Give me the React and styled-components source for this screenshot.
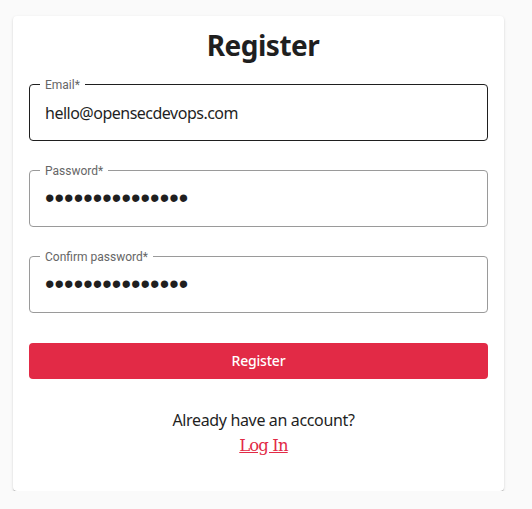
import React from 'react';
import styled, { createGlobalStyle } from 'styled-components';

const GlobalStyle = createGlobalStyle`
  body {
    margin: 0;
    background-color: #fafafa;
    font-family: "Noto Sans", "Liberation Sans", sans-serif;
    color: #1f1f1f;
  }
`;

const fields = [
    { label: 'Email*', type: 'email', value: 'hello@opensecdevops.com', active: true },
    { label: 'Password*', type: 'password', value: 'secretpassword1' },
    { label: 'Confirm password*', type: 'password', value: 'secretpassword1' },
];

const App = () => {
    return (
        <>
            <GlobalStyle />
            <Card>
                <Title>Register</Title>
                <Form onSubmit={(e) => e.preventDefault()}>
                    {fields.map((f) => (
                        <Field key={f.label} $active={f.active}>
                            <Legend>{f.label}</Legend>
                            <Input type={f.type} defaultValue={f.value} $secret={f.type === 'password'} />
                        </Field>
                    ))}
                    <Button type="submit">Register</Button>
                </Form>
                <Footer>
                    <span>Already have an account?</span>
                    <LoginLink href="#login">Log In</LoginLink>
                </Footer>
            </Card>
        </>
    );
};

export default App;

const Card = styled.div`
  box-sizing: border-box;
  width: 491px;
  margin: 16px 0 0 13px;
  padding: 13px 16px 32px;
  background-color: #fff;
  border-radius: 4px;
  box-shadow: 0 2px 1px -1px rgb(0 0 0 / 22%), 0 1px 1px 0 rgb(0 0 0 / 14%), 0 1px 3px 0 rgb(0 0 0 / 12%);
`;

const Title = styled.h1`
  margin: 0 0 16px;
  padding-left: 9px;
  font-size: 28px;
  line-height: 1.2;
  font-weight: 700;
  letter-spacing: -0.5px;
  text-align: center;
  color: #1f1f1f;
`;

const Form = styled.form`
  display: flex;
  flex-direction: column;
  gap: 24px;
`;

const Field = styled.fieldset`
  margin: 0;
  min-width: 0;
  padding: 0 10px;
  border: 1px solid ${(p) => (p.$active ? '#1f1f1f' : '#9a9a9a')};
  border-radius: 4px;
`;

const Legend = styled.legend`
  padding: 0 5px;
  font-family: Roboto, "Noto Sans", sans-serif;
  font-size: 12px;
  line-height: 12px;
  color: #666;
`;

const Input = styled.input`
  display: block;
  box-sizing: border-box;
  width: 100%;
  height: 44px;
  margin: 0 0 5px;
  padding: 0 5px;
  border: 0;
  outline: none;
  background: transparent;
  color: #1f1f1f;
  font-family: ${(p) => (p.$secret ? '"Liberation Sans", sans-serif' : '"Noto Sans", sans-serif')};
  font-size: ${(p) => (p.$secret ? '27px' : '16px')};
  letter-spacing: ${(p) => (p.$secret ? '0.1px' : '-0.5px')};
`;

const Button = styled.button`
  margin-top: 6px;
  height: 36px;
  border: 0;
  border-radius: 4px;
  background-color: #e22a46;
  color: #fff;
  font-family: "Noto Sans", sans-serif;
  font-size: 14px;
  font-weight: 500;
  letter-spacing: -0.2px;
  cursor: pointer;
`;

const Footer = styled.div`
  display: flex;
  flex-direction: column;
  align-items: center;
  margin-top: 29px;
  padding-left: 10px;
  font-size: 16px;
  line-height: 24px;
  letter-spacing: -0.35px;
`;

const LoginLink = styled.a`
  font-family: "DejaVu Serif", serif;
  font-size: 16.5px;
  line-height: 27px;
  letter-spacing: -0.9px;
  color: #e22a46;
  text-decoration: underline;
`;
